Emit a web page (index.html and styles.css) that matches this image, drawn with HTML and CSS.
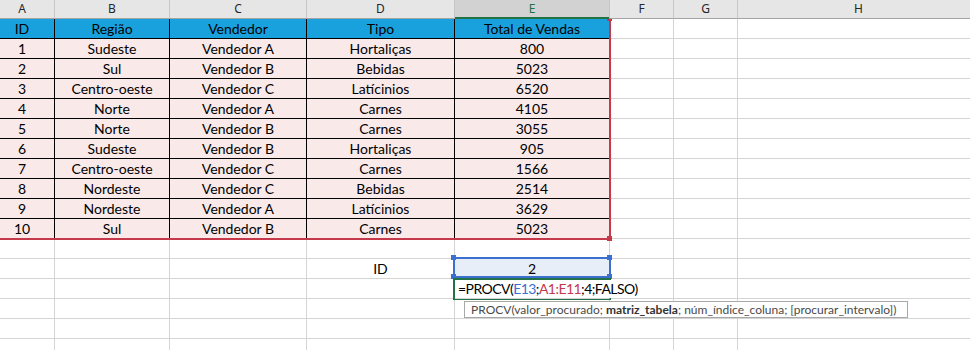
FILE: index.html
```html
<!DOCTYPE html>
<html lang="pt">
<head>
<meta charset="utf-8">
<title>PROCV</title>
<link rel="stylesheet" href="styles.css">
</head>
<body>
<div class="sheet">
  <div class="ch">A</div><div class="ch">B</div><div class="ch">C</div><div class="ch">D</div><div class="ch sel">E</div><div class="ch">F</div><div class="ch">G</div><div class="ch">H</div>

  <div class="th">ID</div><div class="th">Região</div><div class="th">Vendedor</div><div class="th">Tipo</div><div class="th">Total de Vendas</div><div class="c"></div><div class="c"></div><div class="c"></div>

  <div class="td">1</div><div class="td">Sudeste</div><div class="td">Vendedor A</div><div class="td">Hortaliças</div><div class="td">800</div><div class="c"></div><div class="c"></div><div class="c"></div>
  <div class="td">2</div><div class="td">Sul</div><div class="td">Vendedor B</div><div class="td">Bebidas</div><div class="td">5023</div><div class="c"></div><div class="c"></div><div class="c"></div>
  <div class="td">3</div><div class="td">Centro-oeste</div><div class="td">Vendedor C</div><div class="td">Latícinios</div><div class="td">6520</div><div class="c"></div><div class="c"></div><div class="c"></div>
  <div class="td">4</div><div class="td">Norte</div><div class="td">Vendedor A</div><div class="td">Carnes</div><div class="td">4105</div><div class="c"></div><div class="c"></div><div class="c"></div>
  <div class="td">5</div><div class="td">Norte</div><div class="td">Vendedor B</div><div class="td">Carnes</div><div class="td">3055</div><div class="c"></div><div class="c"></div><div class="c"></div>
  <div class="td">6</div><div class="td">Sudeste</div><div class="td">Vendedor B</div><div class="td">Hortaliças</div><div class="td">905</div><div class="c"></div><div class="c"></div><div class="c"></div>
  <div class="td">7</div><div class="td">Centro-oeste</div><div class="td">Vendedor C</div><div class="td">Carnes</div><div class="td">1566</div><div class="c"></div><div class="c"></div><div class="c"></div>
  <div class="td">8</div><div class="td">Nordeste</div><div class="td">Vendedor C</div><div class="td">Bebidas</div><div class="td">2514</div><div class="c"></div><div class="c"></div><div class="c"></div>
  <div class="td">9</div><div class="td">Nordeste</div><div class="td">Vendedor A</div><div class="td">Latícinios</div><div class="td">3629</div><div class="c"></div><div class="c"></div><div class="c"></div>
  <div class="td">10</div><div class="td">Sul</div><div class="td">Vendedor B</div><div class="td">Carnes</div><div class="td">5023</div><div class="c"></div><div class="c"></div><div class="c"></div>

  <div class="c"></div><div class="c"></div><div class="c"></div><div class="c"></div><div class="c"></div><div class="c"></div><div class="c"></div><div class="c"></div>
  <div class="c"></div><div class="c"></div><div class="c"></div><div class="c val">ID</div><div class="c val sv">2</div><div class="c"></div><div class="c"></div><div class="c"></div>
  <div class="c"></div><div class="c"></div><div class="c"></div><div class="c"></div><div class="c fx">=PROCV(<span class="rb">E13</span>;<span class="rr">A1:E11</span>;4;FALSO)</div><div class="c"></div><div class="c"></div><div class="c"></div>
  <div class="c"></div><div class="c"></div><div class="c"></div><div class="c"></div><div class="c"></div><div class="c"></div><div class="c"></div><div class="c"></div>
  <div class="c"></div><div class="c"></div><div class="c"></div><div class="c"></div><div class="c"></div><div class="c"></div><div class="c"></div><div class="c"></div>
  <div class="c"></div><div class="c"></div><div class="c"></div><div class="c"></div><div class="c"></div><div class="c"></div><div class="c"></div><div class="c"></div>

  <div class="ref-red"></div>
  <div class="hdl hdl-red hr-top"></div>
  <div class="hdl hdl-red hr-bot"></div>

  <div class="ref-blue"></div>
  <div class="hdl hdl-blue hb-tl"></div>
  <div class="hdl hdl-blue hb-tr"></div>
  <div class="hdl hdl-blue hb-bl"></div>
  <div class="hdl hdl-blue hb-br"></div>

  <div class="edit-box"></div>

  <div class="tip">PROCV(valor_procurado; <b>matriz_tabela</b>; núm_índice_coluna; [procurar_intervalo])</div>
</div>
</body>
</html>
```
FILE: styles.css
```css
html, body {
  margin: 0;
  padding: 0;
  background: #ffffff;
  overflow: hidden;
}

.sheet {
  position: relative;
  margin-left: -10px;
  display: grid;
  grid-template-columns: 65px 115px 137px 148px 155px 64px 64px 242px;
  grid-template-rows: 19px;
  grid-auto-rows: 20px;
  font-family: "Lato", "Open Sans", sans-serif;
  font-size: 14px;
  color: #000;
}

.sheet > div {
  box-sizing: border-box;
}

.ch {
  background: #e6e6e6;
  border-right: 1px solid #c6c6c6;
  border-bottom: 1px solid #a3a3a3;
  font-family: "Noto Sans", sans-serif;
  font-size: 12px;
  line-height: 18px;
  text-align: center;
  color: #262626;
}

.ch.sel {
  background: #d2d2d2;
  color: #217346;
  border-bottom-color: #217346;
  box-shadow: inset 0 -1px 0 #217346;
}

.c {
  border-right: 1px solid #d4d4d4;
  border-bottom: 1px solid #d4d4d4;
}

.th, .td {
  border-right: 1px solid #000;
  border-bottom: 1px solid #000;
  text-align: center;
  line-height: 20px;
  white-space: nowrap;
}

.th {
  background: #19a1dd;
}

.td {
  background: #f9e9e9;
}

.val {
  text-align: center;
  line-height: 20px;
}

.sv {
  background: #e8eef8;
}

.fx {
  border-right-color: transparent;
  white-space: nowrap;
  overflow: visible;
  padding-left: 3px;
  line-height: 20px;
  letter-spacing: -0.55px;
  position: relative;
  z-index: 2;
}

.rb { color: #3b6fd0; }
.rr { color: #c5394b; }

.ref-red {
  position: absolute;
  left: 8px;
  top: 19px;
  width: 613px;
  height: 221px;
  border-right: 2px solid #c5394b;
  border-bottom: 2px solid #c5394b;
  pointer-events: none;
}

.hdl {
  position: absolute;
  width: 5px;
  height: 5px;
}

.hdl-red { background: #c5394b; }
.hr-top { left: 617px; top: 19px; height: 2px; }
.hr-bot { left: 617px; top: 236px; }

.ref-blue {
  position: absolute;
  left: 463px;
  top: 257px;
  width: 158px;
  height: 21px;
  border: 2px solid #3b6fd0;
  box-sizing: border-box;
}

.hdl-blue { background: #3b6fd0; }
.hb-tl { left: 461px; top: 255px; }
.hb-tr { left: 617px; top: 255px; }
.hb-bl { left: 461px; top: 274px; }
.hb-br { left: 617px; top: 274px; }

.edit-box {
  position: absolute;
  left: 463px;
  top: 278px;
  width: 158px;
  height: 22px;
  border: 2px solid #217346;
  border-right: none;
  box-sizing: border-box;
}

.tip {
  position: absolute;
  left: 474px;
  top: 301px;
  width: 444px;
  height: 17px;
  box-sizing: border-box;
  border: 1px solid #a8a8a8;
  background: #fff;
  font-family: "Lato", sans-serif;
  font-size: 12px;
  line-height: 15px;
  color: #4a4a4a;
  padding-left: 6px;
  white-space: nowrap;
  z-index: 3;
}

.tip b {
  color: #333;
}
```
